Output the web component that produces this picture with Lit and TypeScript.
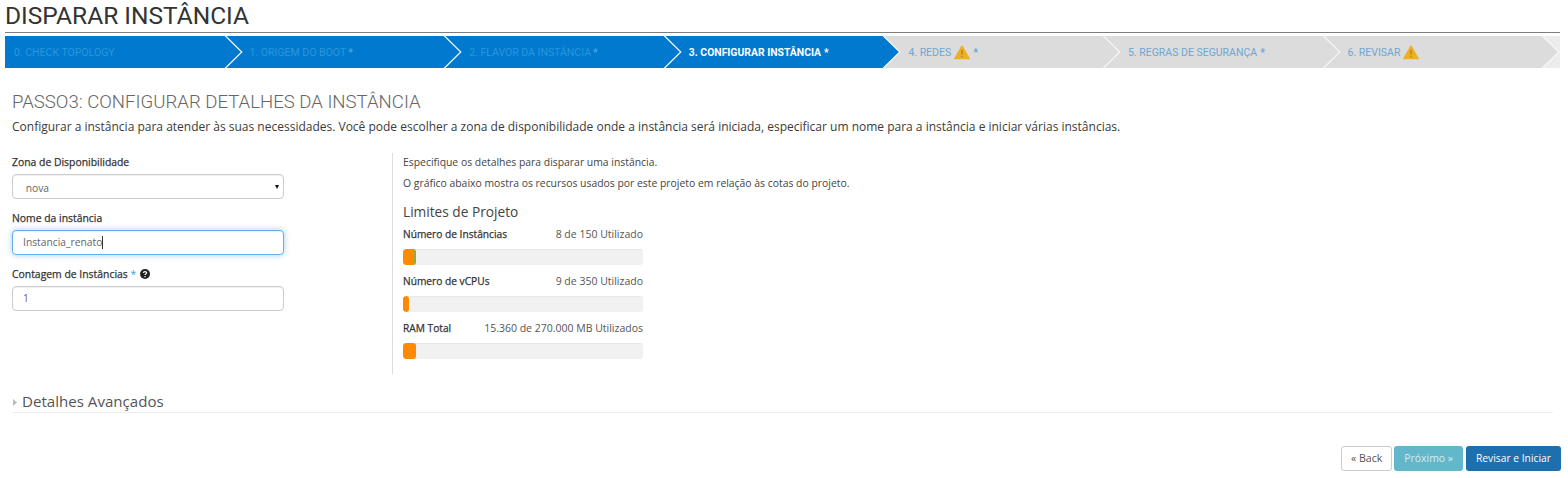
import { LitElement, html, css, svg } from "lit";
import { customElement } from "lit/decorators.js";

const warn = html`<svg class="warn" viewBox="0 0 16 15" width="16" height="15">
  <path d="M8 1.2 L15.2 13.6 H0.8 Z" fill="#edb120" stroke="#edb120" stroke-width="1.4" stroke-linejoin="round"/>
  <path d="M8 4.8V9.6M8 10.8V12.2" stroke="#b9852a" stroke-width="1.6" fill="none"/>
</svg>`;

const chevron = (fill: string) => html`<svg class="chev" viewBox="0 0 18 32" width="18" height="32">
  <path d="M0 0 L16.5 16 L0 32 Z" fill="${fill}"/>
  ${svg`<path d="M0 -0.5 L16.8 16 L0 32.5" fill="none" stroke="#f2f7fb" stroke-width="1.2"/>`}
</svg>`;

const steps = [
  { t: "0. CHECK TOPOLOGY", s: "done" },
  { t: "1. ORIGEM DO BOOT", s: "done", star: true },
  { t: "2. FLAVOR DA INSTÂNCIA", s: "done", star: true },
  { t: "3. CONFIGURAR INSTÂNCIA", s: "active", star: true },
  { t: "4. REDES", s: "todo", warn: true, star: true },
  { t: "5. REGRAS DE SEGURANÇA", s: "todo", star: true },
  { t: "6. REVISAR", s: "todo", warn: true },
];

const limits = [
  { n: "Número de Instâncias", v: "8 de 150 Utilizado", w: 13, edge: true },
  { n: "Número de vCPUs", v: "9 de 350 Utilizado", w: 6 },
  { n: "RAM Total", v: "15.360 de 270.000 MB Utilizados", w: 13 },
];

@customElement("app-root")
export class AppRoot extends LitElement {
  static styles = css`
    :host { display: block; width: 1568px; height: 478px; overflow: hidden; background: #fff; font-family: "Open Sans", sans-serif; color: #333; }
    h1 { margin: 0 8px 0 5px; height: 33px; box-sizing: border-box; border-bottom: 1px solid #7d7d7d; font: 400 24.5px/31px Roboto, sans-serif; color: #333; }
    .wizard { display: flex; margin: 3px 8px 0 5px; height: 32px; background: #ececec; }
    .step { position: relative; flex: none; width: 219.6px; display: flex; align-items: center; padding: 1px 0 0 9px; box-sizing: border-box; font: 400 10.5px/31px Roboto, sans-serif; white-space: nowrap; }
    .step + .step { padding-left: 25px; }
    .done { background: #0079cf; color: #2b96dc; }
    .done .star { margin-left: 2px; color: #45a5e4; }
    .active { background: #0079cf; color: #fff; font-weight: 700; font-size: 10.4px; }
    .todo { background: #dcdcdc; color: #6ea6d3; }
    .chev { position: absolute; left: 100%; top: 0; z-index: 1; overflow: visible; }
    .star { margin-left: 3px; font-weight: 700; }
    .warn { margin: 0 0 1px 3px; }
    h2 { margin: 23px 0 0 12px; font: 300 18.6px/22px Roboto, sans-serif; color: #666; }
    .lead { margin: 5px 0 0 12px; font-size: 12.01px; line-height: 17px; color: #3a3a3a; }
    .cols { display: flex; margin: 18px 0 0 12px; }
    .left { width: 272px; padding-top: 1px; }
    .right { margin-left: 108px; width: 250px; height: 221px; border-left: 1px solid #ddd; padding-left: 10px; box-sizing: content-box; }
    label { display: block; font-size: 10.4px; line-height: 16px; font-weight: 400; -webkit-text-stroke: 0.25px #333; color: #333; }
    label .req { color: #3aa6c8; -webkit-text-stroke: 0; }
    .field { position: relative; box-sizing: border-box; height: 25px; width: 272px; margin: 4px 0 11px; border: 1px solid #ccc; border-radius: 4px; background: #fff; font: 10.3px/23px "Open Sans", sans-serif; color: #666; padding-left: 10px; box-shadow: inset 0 1px 1px rgba(0,0,0,.06); }
    select.field { display: block; appearance: none; padding: 2px 0 0 10px; outline: none; }
    .selwrap { position: relative; }
    .selwrap::after { content: ""; position: absolute; right: 5px; top: 11px; border: 2.5px solid transparent; border-top: 4px solid #111; border-bottom: 0; }
    .focus { border-color: #66afe9; box-shadow: inset 0 1px 1px rgba(0,0,0,.07), 0 0 6px rgba(102,175,233,.6); }
    .caret { display: inline-block; width: 1px; height: 13px; background: #333; vertical-align: -3px; }
    .help { display: inline-block; vertical-align: -1px; margin-left: 1px; }
    .right p { margin: 0 0 6px; font-size: 10.4px; line-height: 16px; color: #444; white-space: nowrap; }
    .right p:first-child { padding-top: 1px; margin-bottom: 5px; }
    h4 { margin: 12px 0 5px; font: 400 13.7px/18px "Open Sans", sans-serif; color: #444; }
    .lim { display: flex; width: 240px; justify-content: space-between; font-size: 10.5px; line-height: 16px; margin-top: 4px; color: #555; white-space: nowrap; }
    .lim b { font-weight: 400; font-size: 10.2px; -webkit-text-stroke: 0.25px #333; color: #333; }
    .bar { width: 240px; height: 16px; margin: 7px 0 8px; background: #f1f1f1; border-radius: 3px; overflow: hidden; box-shadow: inset 0 1px 1px rgba(0,0,0,.04); }
    .fill { height: 100%; background: #ff8a00; border-radius: 3px; box-sizing: border-box; }
    .edge { border-right: 2px solid #8fae3c; }
    .adv { margin: 16px 15px 0 12px; height: 23px; padding-bottom: 1px; border-bottom: 1px solid #eee; display: flex; align-items: center; font-size: 15.1px; line-height: 20px; color: #555; box-sizing: border-box; }
    .adv svg { margin: 3px 5px 0 1px; }
    .btns { display: flex; justify-content: flex-end; gap: 2px; margin: 33px 7px 0 0; }
    .btn { height: 25px; box-sizing: border-box; border-radius: 3px; font-size: 10.4px; line-height: 23px; padding: 0 9px; border: 1px solid transparent; }
    .back { border-color: #ccc; color: #555; background: #fff; font-size: 10.6px; }
    .next { background: #62b8c8; color: #d4eef3; }
    .go { background: #1d6fae; color: #fff; margin-left: 1px; font-size: 10.3px; }
  `;
  render() {
    return html`
      <h1>DISPARAR INSTÂNCIA</h1>
      <div class="wizard">
        ${steps.map((s) => html`<div class="step ${s.s}">
          <span>${s.t}</span>${s.warn ? warn : ""}${s.star ? html`<span class="star">*</span>` : ""}
          ${chevron(s.s === "todo" ? "#dcdcdc" : "#0079cf")}
        </div>`)}
      </div>
      <h2>PASSO3: CONFIGURAR DETALHES DA INSTÂNCIA</h2>
      <p class="lead">Configurar a instância para atender às suas necessidades. Você pode escolher a zona de disponibilidade onde a instância será iniciada, especificar um nome para a instância e iniciar várias instâncias.</p>
      <div class="cols">
        <div class="left">
          <label>Zona de Disponibilidade</label>
          <div class="selwrap"><select class="field"><option>&nbsp;nova</option></select></div>
          <label>Nome da instância</label>
          <div class="field focus">Instancia_renato<span class="caret"></span></div>
          <label>Contagem de Instâncias <span class="req">*</span>
            <svg class="help" viewBox="0 0 10 10" width="10" height="10"><circle cx="5" cy="5" r="5" fill="#222"/><path d="M3.4 3.9C3.5 2.2 6.7 2.3 6.6 4 6.5 5 5 5 5 6.1" stroke="#fff" stroke-width="1.2" fill="none"/><rect x="4.4" y="7" width="1.2" height="1.2" fill="#fff"/></svg>
          </label>
          <div class="field">1</div>
        </div>
        <div class="right">
          <p>Especifique os detalhes para disparar uma instância.</p>
          <p>O gráfico abaixo mostra os recursos usados por este projeto em relação às cotas do projeto.</p>
          <h4>Limites de Projeto</h4>
          ${limits.map((l) => html`
            <div class="lim"><b>${l.n}</b><span>${l.v}</span></div>
            <div class="bar"><div class="fill ${l.edge ? "edge" : ""}" style="width:${l.w}px"></div></div>`)}
        </div>
      </div>
      <div class="adv">
        <svg viewBox="0 0 4 7" width="4" height="7"><path d="M0 0 L4 3.5 L0 7 Z" fill="#bbb"/></svg>
        Detalhes Avançados
      </div>
      <div class="btns">
        <div class="btn back">« Back</div>
        <div class="btn next">Próximo »</div>
        <div class="btn go">Revisar e Iniciar</div>
      </div>
    `;
  }
}
